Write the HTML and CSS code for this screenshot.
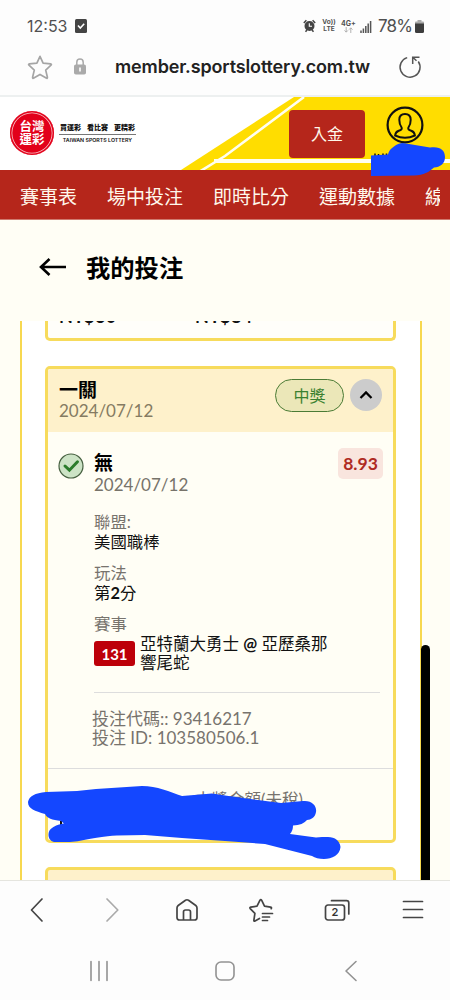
FILE: index.html
```html
<!DOCTYPE html>
<html lang="zh-Hant">
<head>
<meta charset="utf-8">
<title>我的投注</title>
<link rel="stylesheet" href="styles.css">
</head>
<body>
<div class="phone">
  <div class="status">
    <span class="clock">12:53</span>
    <svg class="status-check" width="12" height="14" viewBox="0 0 12 14"><rect width="12" height="14" rx="1.5" fill="#444"/><path d="M3 6.5 5.3 9 9.2 4.8" fill="none" stroke="#fff" stroke-width="1.6"/></svg>
    <div class="status-right">
      <svg width="13" height="14" viewBox="0 0 13 14"><circle cx="6.5" cy="7" r="5" fill="#444"/><path d="M.8 4 3.4 1.2M12.2 4 9.6 1.2M2.5 12.8 4 11M10.5 12.8 9 11" stroke="#444" stroke-width="1.5"/><path d="M6.3 4.2V7.3H9" fill="none" stroke="#fff" stroke-width="1.1"/></svg>
      <span class="tiny volte">Vo))<br>LTE</span>
      <span class="tiny net">4G+<br><svg width="9" height="6" viewBox="0 0 9 6"><path d="M2.2 0V5M.5 3.4 2.2 5.2 3.9 3.4M6.8 6V1M5.1 2.6 6.8.8 8.5 2.6" fill="none" stroke="#aaa" stroke-width=".9"/></svg></span>
      <svg class="signal" width="12" height="13" viewBox="0 0 12 13"><path d="M1 10.5V13M3.4 8.5V13M5.8 6V13M8.2 3.5V13M10.6 1V13" stroke="#555" stroke-width="1.5"/></svg>
      <span class="percent">78%</span>
      <svg width="9" height="13" viewBox="0 0 9 13"><path d="M2.5 0h4v1.5H8A1 1 0 0 1 9 2.500V4H0V2.500A1 1 0 0 1 1 1.500H2.500Z" fill="#aaa"/><path d="M0 3.500H9V11.500A1.500 1.500 0 0 1 7.500 13H1.500A1.500 1.500 0 0 1 0 11.500Z" fill="#3d3d3d"/></svg>
    </div>
  </div>

  <div class="address">
    <svg width="26" height="26" viewBox="0 0 26 26"><path d="M13 2.300 16.100 9.100 23.600 9.900Q25 10.200 24 11.200L18.700 16.100 20.400 23.300Q20.500 24.700 19.200 24.100L13 20.400 6.800 24.100Q5.500 24.700 5.600 23.300L7.300 16.100 2 11.200Q1 10.200 2.400 9.900L9.900 9.100Z" fill="none" stroke="#a5a5a5" stroke-width="1.700" stroke-linejoin="round"/></svg>
    <svg class="lock" width="12" height="17" viewBox="0 0 12 17"><rect y="6.500" width="12" height="10" rx="1.800" fill="#aaa"/><path d="M2.800 7V4.300A3.200 3.200 0 0 1 9.200 4.300V7" fill="none" stroke="#aaa" stroke-width="1.500"/><path d="M6 9.500V13.500" stroke="#fff" stroke-width="1.600"/></svg>
    <span class="url">member.sportslottery.com.tw</span>
    <svg class="reload" width="24" height="24" viewBox="0 0 24 24"><path d="M9.200 2.600A10 10 0 1 0 20.300 6.500" fill="none" stroke="#555" stroke-width="1.500"/><path d="M21.500 2.200H14.700V9M14.800 2.300 18.500 5.800" fill="none" stroke="#555" stroke-width="1.500"/></svg>
  </div>

  <header class="masthead">
    <svg class="rays" width="450" height="73" viewBox="0 97 450 73"><path d="M294 97 181 170H450V97Z" fill="#fd0"/><path d="M304 97 225 156 199 172" fill="none" stroke="#fffef0" stroke-width="2.600"/><path d="M214 161H450" stroke="#fffef0" stroke-width="3.800"/></svg>
    <div class="seal"><span>台灣</span><span>運彩</span></div>
    <div class="tagline"><b>買運彩<i></i>看比賽<i></i>更精彩</b><small>TAIWAN SPORTS LOTTERY</small></div>
    <a class="deposit">入金</a>
    <svg class="user" width="38" height="38" viewBox="0 0 38 38"><circle cx="19" cy="19" r="17.400" fill="none" stroke="#111" stroke-width="2.200"/><path d="M15.600 21.500C13.600 19 13.300 16.500 13.300 13.800 13.300 10 15.800 8 19 8S24.700 10 24.700 13.800C24.700 16.500 24.400 19 22.400 21.500 21.700 23.500 23 24 25.200 24.700 27.500 25.500 28.600 26.500 28.900 29.500Q24 31.800 19 31.800T9.100 29.500C9.400 26.500 10.500 25.500 12.800 24.700 15 24 16.300 23.500 15.600 21.500Z" fill="none" stroke="#111" stroke-width="2"/></svg>
    <svg class="marker" width="80" height="36" viewBox="370 142 80 36"><path d="M375 156V153.500M378.500 156V154M383 155V153.500M386.500 155V153.500" stroke="#111" stroke-width="1.500"/><path d="M371 155.500 388 154.500Q389 149.500 394 146.500 398 143 403 143L430 147.500C440 146 445 150 445 157 445 164 440 167 434 167.500 429 172 424 175 414 175.500L371 176Z" fill="#1447ff"/></svg>
  </header>

  <nav class="menu"><a>賽事表</a><a>場中投注</a><a>即時比分</a><a>運動數據</a><a class="cut">線</a></nav>

  <div class="heading">
    <svg width="28" height="20" viewBox="0 0 28 20"><path d="M27 10H2M10.500 2 2 10 10.500 18" fill="none" stroke="#000" stroke-width="2.600"/></svg>
    <h1>我的投注</h1>
  </div>

  <main class="scroller">
    <div class="panel">
      <section class="card previous"><b>NT$60</b><b>NT$84</b></section>

      <section class="card ticket">
        <div class="ticket-head">
          <div><h2>一關</h2><time>2024/07/12</time></div>
          <span class="won">中獎</span>
          <span class="toggle"><svg width="14" height="10" viewBox="0 0 14 10"><path d="M1.500 8 7 2.400 12.500 8" fill="none" stroke="#000" stroke-width="2.200"/></svg></span>
        </div>
        <div class="leg">
          <svg class="tick" width="26" height="26" viewBox="0 0 26 26"><circle cx="13" cy="13" r="12" fill="#cce3c5" stroke="#466040" stroke-width="1.200"/><path d="M7 13 11.400 17.200 19.500 8.800" fill="none" stroke="#2b7c2b" stroke-width="3" stroke-linecap="round"/></svg>
          <div class="leg-main">
            <div class="leg-top"><div><h2>無</h2><time>2024/07/12</time></div><span class="odds">8.93</span></div>
            <dl>
              <dt>聯盟:</dt><dd>美國職棒</dd>
              <dt>玩法</dt><dd>第<b>2</b>分</dd>
              <dt>賽事</dt>
            </dl>
            <div class="match"><span class="code">131</span><p>亞特蘭大勇士 <b>@</b> 亞歷桑那<br>響尾蛇</p></div>
            <div class="ids">投注代碼:: 93416217<br>投注 ID: 103580506.1</div>
          </div>
        </div>
        <div class="totals"><span>中獎金額(未稅)</span></div>
      </section>

      <section class="card next"></section>
    </div>
    <div class="thumb"></div>
    <svg class="marker-large" width="450" height="559" viewBox="0 321 450 559"><rect x="60" y="821" width="2" height="4" fill="#111"/><path d="M28 802C29 796 35 793 46 792L77 791 96 789 142 786C157 786 170 792 182 796L212 793.500 225 795.500 281 803 303 801C312 800 317 806 316 812 315 818 311 819.500 307 820Q303 825 293 825.500 293 831 290 834L316 837.500 322 837 328 837C335 837 340 841 340.500 847 340 855 332 859 324 859 319 859 315 858 312 856L265 844 225 841 182 838 145 835 117 835.500C90 837 83 842 67 842H54C47 840 47 831 52 828 56 825 59 824.500 64 823.500L61 821C52 820 47 818 45 814 35 811 28 809 28 802Z" fill="#1447ff"/></svg>
  </main>

  <div class="toolbar">
    <svg width="26" height="26" viewBox="0 0 26 26"><path d="M18 2 7.500 13 18 24"/></svg>
    <svg class="faint" width="26" height="26" viewBox="0 0 26 26"><path d="M8 2 18.800 13 8 24"/></svg>
    <svg width="26" height="26" viewBox="0 0 26 26"><path d="M3 11Q3 9.500 4.200 8.500L11.500 3.300Q13 2.200 14.500 3.300L21.800 8.500Q23 9.500 23 11V20.500Q23 23 20.500 23H5.500Q3 23 3 20.500ZM9.500 23V15Q9.500 13 11.500 13H14.500Q16.500 13 16.500 15V23"/></svg>
    <svg width="26" height="26" viewBox="0 0 26 26"><path d="M11.500 21.500 7 24Q5.700 24.600 5.900 23.200L6.900 16.300 2.200 11.600Q1.300 10.500 2.700 10.200L9 9.200 12 3.200Q12.800 2 13.600 3.200L16.500 9.200 22.500 10.200Q24 10.500 23.200 11.700M14.500 16.500H24.500M14.500 20H21.500M14.500 23.500H19.500"/></svg>
    <svg width="28" height="26" viewBox="0 0 28 26"><rect x="2.500" y="8" width="19" height="15" rx="2.500"/><path d="M8.500 3.700H23.500Q25.800 3.700 25.800 6V17"/><text x="12" y="19.300">2</text></svg>
    <svg width="26" height="26" viewBox="0 0 26 26"><path d="M3.500 4.500H22.500M3.500 12.500H22.500M3.500 20.500H22.500"/></svg>
  </div>
  <div class="system">
    <svg width="22" height="22" viewBox="0 0 22 22"><path d="M3 1.500V20.500M11 1.500V20.500M19 1.500V20.500"/></svg>
    <svg width="22" height="22" viewBox="0 0 22 22"><rect x="2" y="2" width="18" height="18" rx="5"/></svg>
    <svg width="22" height="22" viewBox="0 0 22 22"><path d="M16 1.500 6 11 16 20.500"/></svg>
  </div>
</div>
</body>
</html>
```
FILE: styles.css
```css
* { box-sizing: border-box; }
body { margin: 0; font-family: Lato, "Noto Sans CJK TC", sans-serif; color: #111; }
h1, h2, p, dl, dd { margin: 0; }
svg { display: block; flex: none; }
.phone { width: 450px; height: 1000px; display: flex; flex-direction: column; overflow: hidden; background: #fdfdfd; }

.status { height: 50px; flex: none; display: flex; align-items: center; padding: 2px 26px 0 27px; font-family: Inter, sans-serif; color: #505050; }
.clock { font-size: 16px; width: 41px; }
.status-check { margin-left: 7px; }
.status-right { display: flex; align-items: center; margin-left: auto; }
.tiny { font-size: 7px; line-height: 7px; font-weight: 700; text-align: center; }
.tiny svg { margin: auto; }
.volte { margin-left: 6px; width: 14px; font-size: 6.500px; }
.net { margin-left: 5px; width: 14px; }
.signal { margin: 0 6px 0 5px; }
.percent { font-size: 17px; width: 34px; margin-right: 3px; letter-spacing: -.8px; white-space: nowrap; }

.address { height: 47px; flex: none; display: flex; align-items: center; padding: 0 27px 12px; border-bottom: 2px solid #edf0f0; }
.lock { margin-left: 21px; }
.url { margin: 1px 0 0 29px; width: 255px; font: 600 18px/24px Inter, sans-serif; letter-spacing: -.14px; color: #222; white-space: nowrap; }
.reload { margin-left: 28px; }

.masthead { height: 73px; flex: none; position: relative; background: #fff; display: flex; padding-left: 10px; }
.rays { position: absolute; left: 0; top: 0; }
.seal { position: relative; width: 44px; height: 44px; margin-top: 14px; border-radius: 50%; background: #e2001a; box-shadow: inset 0 0 0 1.500px #e2001a, inset 0 0 0 2.300px #f9c5c9; color: #fff; font-weight: 700; font-size: 12.500px; line-height: 13px; display: flex; flex-direction: column; align-items: center; justify-content: center; }
.tagline { position: relative; width: 77px; margin: 24px 0 0 5px; text-align: center; }
.tagline b { display: flex; justify-content: space-between; height: 14px; padding: 0 1px; border-bottom: 1px solid #777; font-size: 7px; line-height: 12px; font-weight: 900; }
.tagline small { display: block; font: 600 5.300px/10px Inter, sans-serif; white-space: nowrap; }
.deposit { position: relative; margin: 13px 0 0 153px; width: 76px; height: 48px; border-radius: 4px; background: #b5261b; color: #fff8ea; font-size: 16px; line-height: 48px; text-align: center; }
.user { position: relative; margin: 9px 0 0 21px; }
.marker { position: absolute; left: 370px; top: 45px; z-index: 1; }

.menu { height: 50px; flex: none; display: flex; gap: 30px; align-items: center; padding: 1px 10px 0 20px; background: #b5261b; color: #fff8ec; font-size: 19px; white-space: nowrap; border-bottom: 1px solid #cf7a6e; }
.menu .cut { width: 15px; overflow: hidden; }

.heading { height: 101px; flex: none; display: flex; align-items: center; gap: 19px; padding: 0 0 8px 39px; background: #fffef5; }
.heading h1 { margin-top: 2px; font-size: 24.300px; line-height: 30px; color: #000; }

.scroller { height: 559px; flex: none; position: relative; overflow: hidden; background: #fffef5; display: flex; padding-left: 20px; }
.panel { width: 402px; height: 559px; flex: none; background: #fff; border: solid #f7d850; border-width: 0 2px; padding: 0 23px; }
.card { border: 3px solid #f7db5c; border-radius: 5px; background: #fffef5; width: 351px; }
.previous { height: 20px; border-top: 0; border-radius: 0 0 5px 5px; padding-left: 11px; display: grid; grid-template-columns: 136px 1fr; overflow: hidden; font-size: 18px; line-height: 20px; background: #fffefa; }
.previous b { margin-top: -15px; letter-spacing: .3px; }
.ticket { height: 477px; margin-top: 25px; overflow: hidden; }
.ticket-head { height: 63px; background: #fef1cb; display: flex; align-items: flex-start; padding: 10px 11px 0; }
.ticket-head > div { flex: 1; }
h2 { font-size: 19px; line-height: 20px; color: #000; }
.ticket-head h2 { padding-top: 1px; line-height: 19px; }
time { display: block; font-size: 17px; line-height: 23px; color: #77736a; }
.ticket-head time { color: #857b62; }
.won { width: 69px; height: 33px; border: 1.500px solid #4b7b35; border-radius: 17px; background: #ebe7b8; color: #3b8130; font-size: 16px; line-height: 31px; text-align: center; }
.toggle { width: 32px; height: 32px; margin-left: 6px; border-radius: 50%; background: #ccc; display: grid; place-items: center; }
.leg { display: flex; padding: 16px 10px 0 10px; height: 336px; }
.tick { margin-top: 5px; }
.leg-main { margin-left: 10px; flex: 1; }
.leg-top { display: flex; justify-content: space-between; height: 63px; padding-top: 5px; }
.odds { width: 45px; height: 31px; margin-top: -5px; border-radius: 5px; background: #f9e5de; color: #af2a22; font-weight: 700; font-size: 17.500px; line-height: 32px; text-align: center; }
dl { font-size: 16.400px; line-height: 20px; padding-top: 1px; }
dt { color: #77736d; }
dd { color: #111; margin-bottom: 11px; }
.match { display: flex; gap: 5px; margin-top: 1px; width: 286px; padding-bottom: 19px; border-bottom: 1px solid #ddd; font-size: 16.500px; line-height: 19px; }
.match p { white-space: nowrap; }
.code { width: 41px; height: 25px; margin-top: 6px; border-radius: 3px; background: #bd0009; color: #fff; font-weight: 700; font-size: 15px; line-height: 26px; text-align: center; }
.ids { margin: 16px 0 0 -2px; font-size: 17px; line-height: 19px; color: #77736d; white-space: nowrap; }
.totals { border-top: 1px solid #ddd; padding: 20px 0 0 147px; font-size: 16.500px; line-height: 22px; color: #77736d; }
.next { height: 80px; margin-top: 24px; background: #fef1cb; }
.thumb { width: 9px; height: 240px; flex: none; margin: 324px 0 0 -1px; border-radius: 5px; background: #000; }
.marker-large { position: absolute; left: 0; top: 0; }

.toolbar { height: 62px; flex: none; border-top: 1px solid #e5e5df; display: flex; justify-content: space-between; align-items: center; padding: 0 24px 3px; }
.toolbar svg, .system svg { fill: none; stroke: #444; stroke-width: 1.700; stroke-linecap: round; stroke-linejoin: round; }
.toolbar .faint { stroke: #aaa; }
.toolbar text { fill: #333; stroke: none; font: 600 11px Inter, sans-serif; text-anchor: middle; }
.system { flex: 1; display: flex; justify-content: space-between; padding: 18px 88px 0 88px; }
.system svg { stroke: #929292; stroke-width: 1.600; }
```
